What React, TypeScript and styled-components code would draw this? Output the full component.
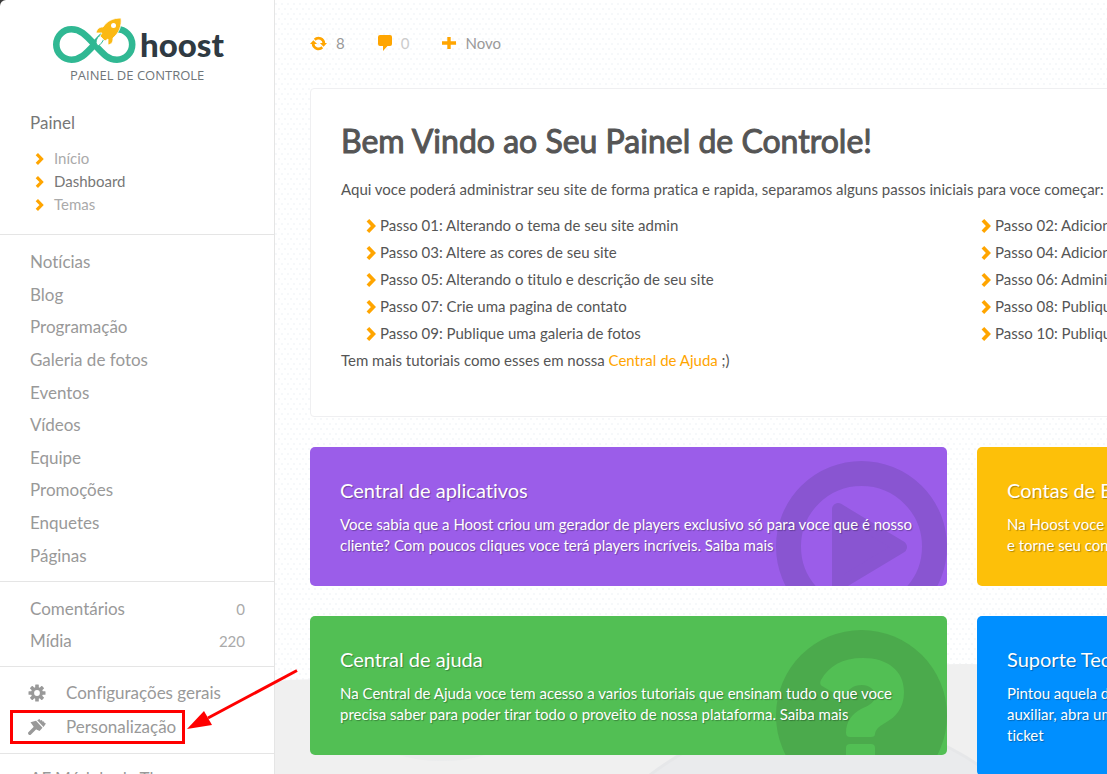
import React from "react";
import styled, { createGlobalStyle } from "styled-components";

const orange = "#ffa500";

const GlobalStyle = createGlobalStyle`
  *, *::before, *::after { box-sizing: border-box; }
  body {
    margin: 0;
    background: #3a3a3a;
    color: #555;
    font-family: Lato, "Open Sans", sans-serif;
    font-size: 15px;
    font-variant-ligatures: none;
    overflow: hidden;
  }
  ul { list-style: none; margin: 0; padding: 0; }
  h1, h2, p { margin: 0; }
  a { color: inherit; text-decoration: none; }
  svg { display: block; flex: none; }
`;

const Page = styled.div`
  display: flex;
  height: 100vh;
  overflow: hidden;
`;

const Sidebar = styled.aside`
  position: relative;
  z-index: 2;
  flex: 0 0 275px;
  background: #fff;
  border-right: 1px solid #e5e5e5;
  border-top-left-radius: 6px;
`;

const Brand = styled.a`
  display: block;
  padding: 16px 0 0 52px;
`;

const BrandRow = styled.span`
  display: flex;
  align-items: flex-end;
  height: 49px;
`;

const BrandName = styled.span`
  margin-left: 3px;
  color: #2f3a42;
  font-size: 33px;
  font-weight: 900;
  line-height: 42px;
`;

const BrandTag = styled.span`
  display: block;
  padding-left: 18px;
  color: #6f7579;
  font: 13px/20px "Open Sans", sans-serif;
`;

const PanelSection = styled.section`
  padding: 26px 30px 18px;
`;

const PanelTitle = styled.h2`
  font-size: 17px;
  font-weight: 400;
  line-height: 24px;
  color: #777;
  margin-bottom: 12px;
`;

const SubItem = styled.li<{ $active?: boolean }>`
  line-height: 23px;
  color: ${(p) => (p.$active ? "#777" : "#aaa")};
  a {
    display: flex;
    align-items: center;
    gap: 10px;
    padding-left: 5px;
  }
`;

const MenuGroup = styled.ul<{ $height: number; $top?: number }>`
  display: flex;
  flex-direction: column;
  min-height: ${(p) => p.$height}px;
  padding: ${(p) => p.$top ?? 11}px 29px 9px 30px;
  border-top: 1px solid #e5e5e5;
`;

const MenuItem = styled.li`
  position: relative;
  display: flex;
  flex: 1;
  align-items: center;
  justify-content: space-between;
  line-height: 24px;
  font-size: 17px;
  color: #999;
`;

const Count = styled.span`
  font-size: 15px;
  color: #aaa;
`;

const IconLink = styled.a`
  display: flex;
  align-items: center;
  gap: 20px;
  svg { margin-left: -2px; }
`;

const Annotation = styled.svg`
  position: absolute;
  left: -20px;
  bottom: 0;
  pointer-events: none;
`;

const Main = styled.main`
  position: relative;
  flex: 1;
  min-width: 0;
  overflow: hidden;
  padding: 0 35px;
  background-color: #f6f8fa;
  background-image:
    conic-gradient(from 90deg at 2px 8px, transparent 270deg, #fff 270deg),
    conic-gradient(from 90deg at 2px 8px, transparent 270deg, #fff 270deg);
  background-size: 6px 10px;
  background-position: 0 0, 3px 5px;
`;

const Backdrop = styled.svg`
  position: absolute;
  left: 0;
  bottom: 0;
`;

const Content = styled.div`
  position: relative;
  min-width: 1304px;
`;

const Toolbar = styled.nav`
  display: flex;
  align-items: center;
  height: 88px;
  padding-bottom: 2px;
  gap: 33px;
`;

const Tool = styled.a<{ $muted?: boolean }>`
  display: flex;
  align-items: center;
  gap: 9px;
  color: ${(p) => (p.$muted ? "#ccc" : "#999")};
`;

const Welcome = styled.section`
  min-height: 329px;
  padding: 30px;
  background: #fff;
  border: 1px solid #efeff1;
  border-radius: 4px;
  line-height: 27px;
`;

const WelcomeTitle = styled.h1`
  font-size: 32px;
  font-weight: 400;
  -webkit-text-stroke: 1px #555;
  line-height: 44px;
  margin-bottom: 13px;
`;

const Steps = styled.ul`
  display: grid;
  grid-template-columns: repeat(2, minmax(615px, 1fr));
  padding: 9px 0 0 25px;
`;

const Step = styled.li`
  a {
    display: flex;
    align-items: center;
    gap: 4px;
  }
`;

const HelpLink = styled.a`
  color: ${orange};
`;

const Cards = styled.div`
  display: grid;
  grid-template-columns: repeat(2, minmax(637px, 1fr));
  align-items: start;
  gap: 30px;
  margin-top: 30px;
`;

const Card = styled.article<{ $color: string }>`
  position: relative;
  overflow: hidden;
  padding: 30px;
  border-radius: 5px;
  background: ${(p) => p.$color};
  color: #fff;
  text-shadow: 1px 1px 1px rgba(0, 0, 0, 0.3);
`;

const CardArt = styled.svg`
  position: absolute;
  right: 0;
  top: 14px;
`;

const CardTitle = styled.h2`
  position: relative;
  font-size: 20px;
  font-weight: 400;
  line-height: 27px;
  margin-bottom: 10px;
`;

const CardText = styled.p`
  position: relative;
  line-height: 21px;
`;

const Chevron = ({ size = 12 }: { size?: number }) => (
  <svg width={size === 12 ? 9 : 10} height={size} viewBox="0 0 10 14" aria-hidden="true">
    <path d="M1.900 1.300 7.400 7l-5.500 5.700" fill="none" stroke={orange} strokeWidth="3.700" />
  </svg>
);

const LogoMark = () => (
  <svg width="85" height="49" viewBox="0 0 85 49" aria-hidden="true">
    <path
      d="M42.500 28.500C33 18 28 13.300 19.500 13.300a15.200 15.200 0 0 0 0 30.400c8.500 0 13.500-4.700 23-15.200s14-15.200 22.500-15.200a15.200 15.200 0 0 1 0 30.400c-8.500 0-13-4.700-22.500-15.200z"
      fill="none"
      stroke="#30b893"
      strokeWidth="6.600"
    />
    <path d="M44 27c0-4 2-7 5-8l3 3c-1 4-4 7-6 8z" fill="#fff" stroke="#30b893" />
    <path
      d="M69 2c-8 0-14 3-18 9-4 0-6 2-7 6l6 0-2 3 5 5 3-2 0 6c4-1 5-3 5-7C67 17 70 10 69 2z"
      fill="#fbb914"
      stroke="#fff"
      strokeWidth="0.800"
    />
    <circle cx="61.500" cy="9.500" r="2.500" fill="#fff" />
  </svg>
);

const GearIcon = () => (
  <svg width="18" height="18" viewBox="0 0 18 18" aria-hidden="true">
    <g fill="#999">
      {[0, 45, 90, 135].map((a) => (
        <rect key={a} x="7.200" y="0.500" width="3.600" height="17" rx="0.500" transform={`rotate(${a} 9 9)`} />
      ))}
      <circle cx="9" cy="9" r="6" />
    </g>
    <circle cx="9" cy="9" r="2.900" fill="#fff" />
  </svg>
);

const BrushIcon = () => (
  <svg width="18" height="18" viewBox="0 0 18 18" aria-hidden="true">
    <path d="M1.800 15.200 8 9" stroke="#999" strokeWidth="3.400" strokeLinecap="round" />
    <path d="M2.500 4.200 8 2.800l6.500 7-3 3.200-3-1.500L5.500 8.500z" fill="#999" />
    <path d="M9.200 2.200 11.500 1l1 1.500 1.500-.5.500 1.500 1.500 0 .5 1.500 1.500.5-2.500 3.500z" fill="#999" />
  </svg>
);

const RefreshIcon = () => (
  <svg width="17" height="15" viewBox="0 0 18 15" aria-hidden="true">
    <path d="M5 3.500a5.700 5.700 0 0 1 9.700 4M13 11.500a5.700 5.700 0 0 1-9.700-4" fill="none" stroke={orange} strokeWidth="2.800" />
    <path d="M0 8 3.600 4 7.500 8zM10.500 7 14.400 11 18 7z" fill={orange} />
  </svg>
);

const CommentIcon = () => (
  <svg width="14" height="16" viewBox="0 0 14 16" aria-hidden="true">
    <path d="M2 0h10a2 2 0 0 1 2 2v7a2 2 0 0 1-2 2h-2.500L5 16v-5H2a2 2 0 0 1-2-2V2a2 2 0 0 1 2-2z" fill={orange} />
  </svg>
);

const PlusIcon = () => (
  <svg width="14" height="14" viewBox="0 0 14 14" aria-hidden="true">
    <path d="M7 1v12M0 7h14" stroke={orange} strokeWidth="3.400" />
  </svg>
);

const menu = [
  "Notícias", "Blog", "Programação", "Galeria de fotos", "Eventos",
  "Vídeos", "Equipe", "Promoções", "Enquetes", "Páginas",
];

const steps = [
  "Passo 01: Alterando o tema de seu site admin",
  "Passo 02: Adicionando um banner",
  "Passo 03: Altere as cores de seu site",
  "Passo 04: Adicionando um player",
  "Passo 05: Alterando o titulo e descrição de seu site",
  "Passo 06: Administrando os menus",
  "Passo 07: Crie uma pagina de contato",
  "Passo 08: Publique uma noticia",
  "Passo 09: Publique uma galeria de fotos",
  "Passo 10: Publique um video",
];

export default function App() {
  return (
    <>
      <GlobalStyle />
      <Page>
        <Sidebar>
          <Brand href="#">
            <BrandRow>
              <LogoMark />
              <BrandName>hoost</BrandName>
            </BrandRow>
            <BrandTag>PAINEL DE CONTROLE</BrandTag>
          </Brand>
          <PanelSection>
            <PanelTitle>Painel</PanelTitle>
            <ul>
              {["Início", "Dashboard", "Temas"].map((t) => (
                <SubItem key={t} $active={t === "Dashboard"}>
                  <a href="#"><Chevron />{t}</a>
                </SubItem>
              ))}
            </ul>
          </PanelSection>
          <MenuGroup $height={347}>
            {menu.map((t) => (
              <MenuItem key={t}><a href="#">{t}</a></MenuItem>
            ))}
          </MenuGroup>
          <MenuGroup $height={85}>
            <MenuItem><a href="#">Comentários</a><Count>0</Count></MenuItem>
            <MenuItem><a href="#">Mídia</a><Count>220</Count></MenuItem>
          </MenuGroup>
          <MenuGroup $height={87} $top={9}>
            <MenuItem>
              <IconLink href="#"><GearIcon />Configurações gerais</IconLink>
            </MenuItem>
            <MenuItem>
              <IconLink href="#"><BrushIcon />Personalização</IconLink>
              <Annotation width="290" height="76" viewBox="0 0 290 76" aria-hidden="true">
                <rect x="1.500" y="43.500" width="172" height="31" fill="none" stroke="#f00" strokeWidth="3" />
                <path d="M287 2.500 198 50" stroke="#f00" strokeWidth="3" />
                <path d="M177 61 194 43 202 57z" fill="#f00" />
              </Annotation>
            </MenuItem>
          </MenuGroup>
          <MenuGroup $height={49}>
            <MenuItem><a href="#">AF Módulo de Theme</a></MenuItem>
          </MenuGroup>
        </Sidebar>
        <Main>
          <Backdrop width="1400" height="110" viewBox="0 0 1400 110" aria-hidden="true">
            <path d="M0 17Q40 13 90 18L560 20Q620 0 690 0T860 14L1400 20V110H0z" fill="#f0f0f0" />
            <ellipse cx="167" cy="76" rx="62" ry="21" fill="#ebeced" />
            <circle cx="546" cy="334" r="281" fill="#eaebed" stroke="#e6e7e9" strokeWidth="3" />
          </Backdrop>
          <Content>
            <Toolbar>
              <Tool href="#"><RefreshIcon />8</Tool>
              <Tool href="#" $muted><CommentIcon />0</Tool>
              <Tool href="#"><PlusIcon />Novo</Tool>
            </Toolbar>
            <Welcome>
              <WelcomeTitle>Bem Vindo ao Seu Painel de Controle!</WelcomeTitle>
              <p>
                Aqui voce poderá administrar seu site de forma pratica e rapida, separamos alguns
                passos iniciais para voce começar:
              </p>
              <Steps>
                {steps.map((s) => (
                  <Step key={s}><a href="#"><Chevron size={14} />{s}</a></Step>
                ))}
              </Steps>
              <p>
                Tem mais tutoriais como esses em nossa <HelpLink href="#">Central de Ajuda</HelpLink> ;)
              </p>
            </Welcome>
            <Cards>
              <Card $color="#9b5de9">
                <CardArt width="171" height="171" viewBox="0 0 171 171" aria-hidden="true">
                  <circle cx="85.500" cy="85.500" r="73" fill="none" stroke="#8955d1" strokeWidth="25" />
                  <path d="M62 48v76l63-38z" fill="#8955d1" stroke="#8955d1" strokeWidth="12" strokeLinejoin="round" />
                </CardArt>
                <CardTitle>Central de aplicativos</CardTitle>
                <CardText>
                  Voce sabia que a Hoost criou um gerador de players exclusivo só para voce que é nosso
                  cliente? Com poucos cliques voce terá players incríveis. <a href="#">Saiba mais</a>
                </CardText>
              </Card>
              <Card $color="#fdc009">
                <CardTitle>Contas de E-mail</CardTitle>
                <CardText>
                  Na Hoost voce cria contas de e-mail<br />e torne seu contato profissional
                </CardText>
              </Card>
              <Card $color="#52bf54">
                <CardArt width="171" height="171" viewBox="0 0 171 171" aria-hidden="true">
                  <circle cx="85.500" cy="85.500" r="85.500" fill="#4baa4c" />
                  <path
                    d="M46 56q-3-2-1-6C53 36 66 28 87 28c25 0 41 13 41 34 0 16-8 25-19 31-7 4-9 6-10 11q0 3-4 3H74q-4 0-4-4c0-12 6-19 15-24 9-4 14-7 14-13 0-7-6-11-13-11-9 0-14 5-18 10q-2 3-5 1z"
                    fill="#52bf54"
                  />
                  <rect x="70" y="114" width="29" height="30" rx="4" fill="#52bf54" />
                </CardArt>
                <CardTitle>Central de ajuda</CardTitle>
                <CardText>
                  Na Central de Ajuda voce tem acesso a varios tutoriais que ensinam tudo o que voce
                  precisa saber para poder tirar todo o proveito de nossa plataforma. <a href="#">Saiba mais</a>
                </CardText>
              </Card>
              <Card $color="#008fff">
                <CardTitle>Suporte Tecnico</CardTitle>
                <CardText>
                  Pintou aquela duvida? Nossa equipe pode te<br />auxiliar, abra um<br />ticket
                </CardText>
              </Card>
            </Cards>
          </Content>
        </Main>
      </Page>
    </>
  );
}
